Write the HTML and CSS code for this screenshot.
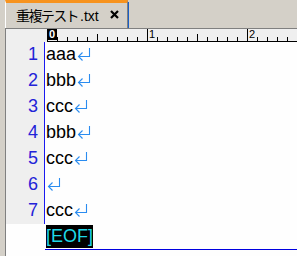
FILE: index.html
```html
<!DOCTYPE html>
<html lang="ja">
	<head>
		<meta charset="UTF-8">
		<title>重複テスト.txt</title>
		<link rel="stylesheet" href="styles.css">
	</head>
	<body>
		<div class="window">

			<div class="tabbar">
				<div class="tab">
					<span class="tab-title"><span class="jp">重複テスト</span>.txt</span>
					<svg class="tab-close" width="9" height="9" viewBox="0 0 9 9">
						<path d="M1 1 L8 8 M8 1 L1 8" stroke="#000" stroke-width="2.2" fill="none"/>
					</svg>
				</div>
				<div class="tab-focus"></div>
			</div>

			<div class="editor">
				<div class="ruler">
					<div class="ruler-pad"></div>
					<div class="ruler-scale">
						<div class="decade"><span class="mark current">0</span></div>
						<div class="decade"><span class="mark">1</span></div>
						<div class="decade"><span class="mark">2</span></div>
					</div>
				</div>

				<div class="row"><div class="num">1</div><div class="text">aaa<svg class="ret" width="14" height="13" viewBox="0 0 14 13"><path d="M12.5 0 V8.5 H1.5 M5.5 4.5 L1.5 8.5 L5.5 12.5" stroke="#2a8cf0" stroke-width="1.1" fill="none"/></svg></div></div>
				<div class="row"><div class="num">2</div><div class="text">bbb<svg class="ret" width="14" height="13" viewBox="0 0 14 13"><path d="M12.5 0 V8.5 H1.5 M5.5 4.5 L1.5 8.5 L5.5 12.5" stroke="#2a8cf0" stroke-width="1.1" fill="none"/></svg></div></div>
				<div class="row"><div class="num">3</div><div class="text">ccc<svg class="ret" width="14" height="13" viewBox="0 0 14 13"><path d="M12.5 0 V8.5 H1.5 M5.5 4.5 L1.5 8.5 L5.5 12.5" stroke="#2a8cf0" stroke-width="1.1" fill="none"/></svg></div></div>
				<div class="row"><div class="num">4</div><div class="text">bbb<svg class="ret" width="14" height="13" viewBox="0 0 14 13"><path d="M12.5 0 V8.5 H1.5 M5.5 4.5 L1.5 8.5 L5.5 12.5" stroke="#2a8cf0" stroke-width="1.1" fill="none"/></svg></div></div>
				<div class="row"><div class="num">5</div><div class="text">ccc<svg class="ret" width="14" height="13" viewBox="0 0 14 13"><path d="M12.5 0 V8.5 H1.5 M5.5 4.5 L1.5 8.5 L5.5 12.5" stroke="#2a8cf0" stroke-width="1.1" fill="none"/></svg></div></div>
				<div class="row"><div class="num">6</div><div class="text"><svg class="ret" width="14" height="13" viewBox="0 0 14 13"><path d="M12.5 0 V8.5 H1.5 M5.5 4.5 L1.5 8.5 L5.5 12.5" stroke="#2a8cf0" stroke-width="1.1" fill="none"/></svg></div></div>
				<div class="row"><div class="num">7</div><div class="text">ccc<svg class="ret" width="14" height="13" viewBox="0 0 14 13"><path d="M12.5 0 V8.5 H1.5 M5.5 4.5 L1.5 8.5 L5.5 12.5" stroke="#2a8cf0" stroke-width="1.1" fill="none"/></svg></div></div>

				<div class="row eof">
					<div class="num"></div>
					<div class="text"><span class="eof-mark">[EOF]</span></div>
				</div>
			</div>

		</div>
	</body>
</html>
```

FILE: styles.css
```css
body {
	margin: 0;
	background-color: #d4d0c8;
	font-family: "Liberation Sans", Arial, sans-serif;
}

.window {
	display: flex;
	flex-direction: column;
	height: 256px;
	overflow: hidden;
}

/* tab bar */

.tabbar {
	display: flex;
	height: 28px;
	padding-left: 5px;
}

.tab {
	display: flex;
	align-items: center;
	box-sizing: border-box;
	width: 123px;
	height: 28px;
	border-top: 3px solid #f7931e;
	border-left: 1px solid #ffffff;
	border-right: 1px solid #808080;
	padding: 0 8px 1px 10px;
	background-color: #d4d0c8;
}

.tab-title {
	font-size: 14px;
	color: #000;
	white-space: nowrap;
}

.tab-title .jp {
	font-family: "Noto Sans CJK JP", sans-serif;
	letter-spacing: -1.6px;
	margin-right: 2px;
}

.tab-close {
	margin-left: auto;
	margin-bottom: 1px;
}

.tab-focus {
	width: 1px;
	height: 26px;
	margin-top: 2px;
	background-color: #1a5fc8;
}

/* editor */

.editor {
	flex: 1;
	margin-left: 5px;
	border-top: 1px solid #808080;
	border-left: 1px solid #808080;
	background-color: #fefefe;
}

.ruler {
	display: flex;
	height: 13px;
	background-color: #efefef;
}

.ruler-pad {
	flex: none;
	width: 41px;
}

.ruler-scale {
	flex: 1;
	min-width: 0;
	overflow: hidden;
	display: flex;
	height: 12px;
	border-bottom: 1px solid #000;
}

.decade {
	flex: none;
	box-sizing: border-box;
	width: 100px;
	height: 12px;
	border-left: 1px solid #000;
	background-image:
		linear-gradient(#000, #000),
		linear-gradient(to right, #000 1px, transparent 1px);
	background-size: 1px 7px, 10px 4px;
	background-position: 49px bottom, 9px bottom;
	background-repeat: no-repeat, repeat-x;
}

.mark {
	display: inline-block;
	font-size: 11px;
	line-height: 11px;
	height: 11px;
	color: #000;
	vertical-align: top;
	padding-left: 1px;
}

.mark.current {
	width: 10px;
	box-sizing: border-box;
	margin-left: -1px;
	padding-left: 2px;
	background-color: #000;
	color: #fff;
	font-weight: bold;
}

.row {
	display: flex;
	height: 26px;
	font-size: 18px;
	line-height: 24px;
}

.num {
	flex: none;
	box-sizing: border-box;
	width: 39px;
	padding-right: 6px;
	text-align: right;
	color: #2323d8;
	background-color: #efefef;
	border-right: 1px solid #1a1af0;
}

.text {
	flex: 1;
	padding-left: 1px;
	color: #000;
	white-space: nowrap;
}

.ret {
	vertical-align: -1px;
	margin-left: 1px;
}

.row.eof {
	height: 26px;
	line-height: 23px;
}

.row.eof .num {
	background-color: transparent;
	border-right-color: transparent;
}

.row.eof .text {
	border-bottom: 1px solid #0000e0;
}

.eof-mark {
	display: inline-block;
	margin-top: 1px;
	height: 23px;
	background-color: #000;
	color: #1ed8e8;
}
```
